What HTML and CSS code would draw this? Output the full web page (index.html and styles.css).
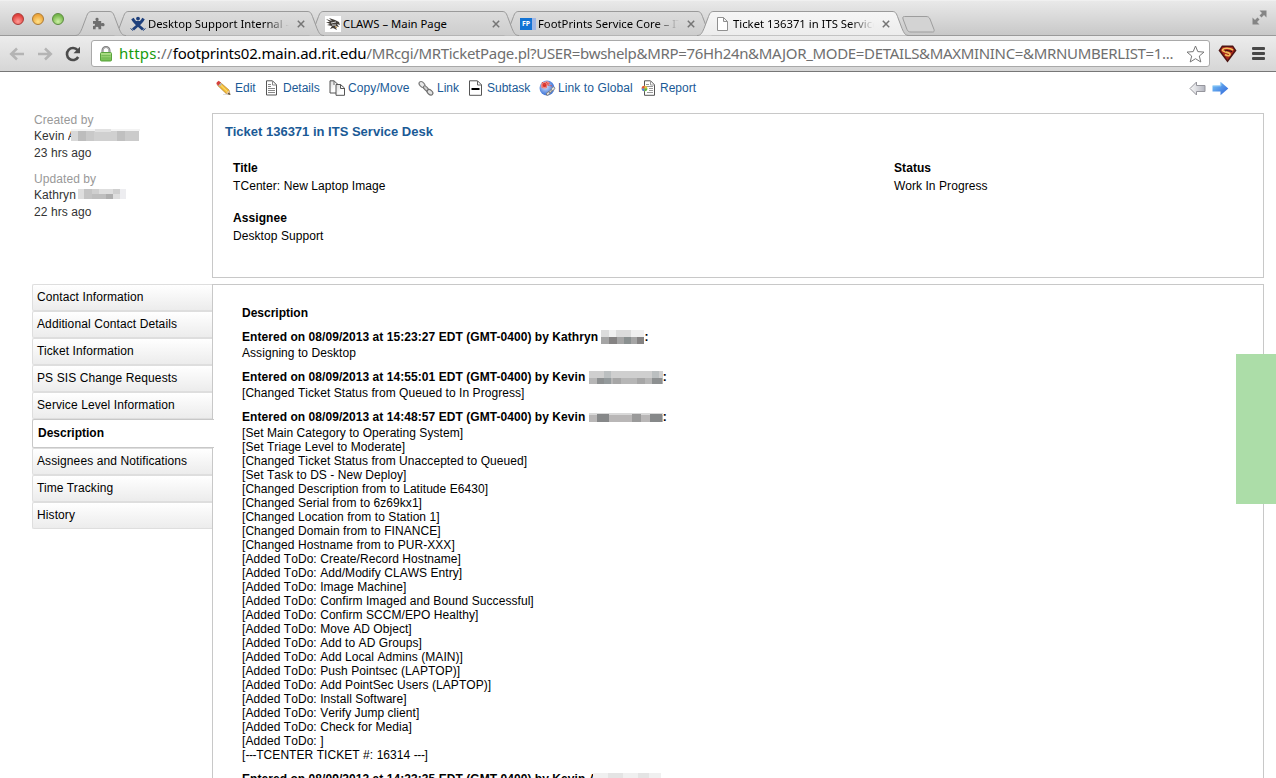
FILE: index.html
```html
<!DOCTYPE html>
<html lang="en">
<head>
<meta charset="utf-8">
<title>Ticket 136371 in ITS Service Desk</title>
<link rel="stylesheet" href="styles.css">
</head>
<body>
<svg width="0" height="0" class="defs">
  <defs>
    <linearGradient id="tabfill" x1="0" y1="0" x2="0" y2="1"><stop offset="0" stop-color="#dcdcdc"/><stop offset="1" stop-color="#cdcdcd"/></linearGradient>
    <linearGradient id="activefill" x1="0" y1="0" x2="0" y2="1"><stop offset="0" stop-color="#f6f6f6"/><stop offset="1" stop-color="#ececec"/></linearGradient>
    <linearGradient id="gl" x1="0" y1="0" x2="0" y2="1"><stop offset="0" stop-color="#b5e08d"/><stop offset="1" stop-color="#6dbb4b"/></linearGradient>
    <linearGradient id="blue" x1="0" y1="0" x2="1" y2="1"><stop offset="0" stop-color="#7cc8f8"/><stop offset="1" stop-color="#2c62d8"/></linearGradient>
    <linearGradient id="grey" x1="0" y1="0" x2="1" y2="0"><stop offset="0" stop-color="#fafafa"/><stop offset="1" stop-color="#b4b6c0"/></linearGradient>
    <radialGradient id="globe" cx=".4" cy=".4"><stop offset="0" stop-color="#dbe9ff"/><stop offset="1" stop-color="#4c7fdc"/></radialGradient>
    <linearGradient id="paper" x1="0" y1="0" x2="1" y2="1"><stop offset="0" stop-color="#d8d8d8"/><stop offset=".6" stop-color="#fff"/></linearGradient>
    <g id="chain" fill="none" stroke-linecap="round">
      <g stroke="#7e7e7e" stroke-width="3.2"><path d="M2.5 3.5 5.5 6.5M6 7l3.5 3.500M9.500 10.500 12.500 13"/></g>
      <ellipse cx="4" cy="4.500" rx="3.400" ry="2.200" transform="rotate(45 4 4.500)" stroke="#808080" stroke-width="1.200" fill="#e8e8e8"/>
      <ellipse cx="8" cy="8.500" rx="3.200" ry="1.600" transform="rotate(45 8 8.500)" stroke="#777" fill="#ccc"/>
      <ellipse cx="12" cy="12.300" rx="3.200" ry="2.200" transform="rotate(40 12 12.300)" stroke="#707070" stroke-width="1.200" fill="#e2e2e2"/>
    </g>
    <path id="tabwide" d="M0 24.500C4 24.500 5 22 7 17.500L11.500 5.500C13 1.500 14 .5 17 .5H195C198 .5 199 1.500 200.500 5.500L205 17.500C207 22 208 24.500 212 24.500" stroke="#9a9a9a"/>
  </defs>
</svg>

<header class="titlebar">
  <div class="lights"><i class="light red"></i><i class="light amber"></i><i class="light green"></i></div>
  <div class="tabs">
    <div class="tab tab-small">
      <svg width="51" height="25"><path d="M0 24.500C4 24.500 5 22 7 17.500L11.500 5.500C13 1.500 14 .5 17 .5H34C37 .5 38 1.500 39.500 5.500L44 17.500C46 22 47 24.500 51 24.500" fill="url(#tabfill)" stroke="#9a9a9a"/></svg>
      <div class="tab-body">
        <svg width="13" height="13" viewBox="0 0 13 13"><path d="M1 4H4C3 2.500 3.300.8 5 .8S7 2.500 6.200 4H9.200V6.500C10.500 5.700 12.600 6 12.600 7.700S10.500 9.600 9.200 8.800V12.300H6.300C7 10.800 6.300 9.800 5 9.800S3.200 10.800 3.800 12.300H1V8.800C2.300 9.300 3 8.800 3 7.800S2.300 6.600 1 7Z" fill="#6e6e6e"/></svg>
      </div>
    </div>
    <div class="tab">
      <svg width="212" height="25"><use href="#tabwide" fill="url(#tabfill)"/></svg>
      <div class="tab-body">
        <svg width="16" height="16" viewBox="0 0 16 16"><g fill="none" stroke="#1d3f7c" stroke-width="2.800"><path d="M2.500 2.500C5 7.500 9.500 10 13 13.500M13.500 2.500C11 7.500 6.500 10 3 13.500"/></g><circle cx="8" cy="2.600" r="1.900" fill="#1d3f7c"/><path d="M.5 12.500 3 14.500M15.500 12.500 13 14.500M5.500 5.500H10.500L9 9H7Z" stroke="#1d3f7c" fill="#1d3f7c"/></svg>
        <span class="label s1">Desktop Support Internal –</span>
        <svg class="x" width="8" height="8"><path d="M.8.8 7.200 7.200M7.200.8.8 7.200"/></svg>
      </div>
    </div>
    <div class="tab">
      <svg width="212" height="25"><use href="#tabwide" fill="url(#tabfill)"/></svg>
      <div class="tab-body">
        <svg width="16" height="16"><rect width="16" height="16" fill="#fff"/><path d="M1 3 7 5 4 2 10 4 14 6 15 9 12 8 14 11 10 10 12 14 8 12 5 13 7 10 2 9 5 8 1 6 5 6Z" fill="#443f3a"/><path d="M6 7 11 6M7 9 11 9" stroke="#ddd"/><path d="M10 10 12 12" stroke="#c89a4c"/></svg>
        <span class="label s2">CLAWS – Main Page</span>
        <svg class="x" width="8" height="8"><path d="M.8.8 7.200 7.200M7.200.8.8 7.200"/></svg>
      </div>
    </div>
    <div class="tab">
      <svg width="212" height="25"><use href="#tabwide" fill="url(#tabfill)"/></svg>
      <div class="tab-body">
        <span class="fp"><b>FP</b></span>
        <span class="label s3">FootPrints Service Core – IT</span>
        <svg class="x" width="8" height="8"><path d="M.8.8 7.200 7.200M7.200.8.8 7.200"/></svg>
      </div>
    </div>
    <div class="tab active">
      <svg width="212" height="25"><use href="#tabwide" fill="url(#activefill)"/></svg>
      <div class="tab-body">
        <svg width="16" height="16"><path d="M2.500 1.500H8.500L12.500 5.500V14.500H2.500ZM8.500 1.500V5.500H12.500" fill="#fff" stroke="#909090"/></svg>
        <span class="label s4">Ticket 136371 in ITS Service</span>
        <svg class="x" width="8" height="8"><path d="M.8.8 7.200 7.200M7.200.8.8 7.200"/></svg>
      </div>
    </div>
    <svg class="newtab" width="33" height="17"><path d="M2.500.5H24C26 .5 27 1 28 3L32 13.500C32.500 15.500 32 16 30.500 16H9C7 16 6 15.500 5 13.500L1 3C.5 1 1 .5 2.500.5Z" fill="#d3d3d3" stroke="#9d9d9d"/></svg>
  </div>
  <svg class="expand" width="15" height="15"><path d="M7.500.5H14.500V7.500L12 5 9.500 7.500 7.500 5.500 10 3ZM7.500 14.500H.5V7.500L3 10 5.500 7.500 7.500 9.500 5 12Z" fill="#858585"/></svg>
</header>

<div class="toolbar">
  <svg class="nav-icon" width="16" height="14"><path d="M8 1.500 2.200 7 8 12.500M2.500 7H15" /></svg>
  <svg class="nav-icon" width="16" height="14"><path d="M8 1.500 13.800 7 8 12.500M13.500 7H1" /></svg>
  <svg class="reload" width="16" height="16"><path d="M12.600 4.200A6 6 0 1 0 13.200 11" fill="none" stroke="#4c4c4c" stroke-width="2.600"/><path d="M15 .8V7.300H8.500Z" fill="#4c4c4c"/></svg>
  <div class="omnibox">
    <svg width="12" height="16"><path d="M2.500 8V4.500A3.500 3.500 0 0 1 9.500 4.500V8" fill="none" stroke="#777" stroke-width="2"/><path d="M2.700 8V4.500A3.300 3.300 0 0 1 9.300 4.500V8" fill="none" stroke="#ccc" stroke-width=".7"/><rect x=".5" y="6.500" width="11" height="8.500" rx="1" fill="url(#gl)" stroke="#58a33c"/><path d="M1.500 9.500H10.500M1.500 12H10.500" stroke="#67b04a" stroke-width=".7"/></svg>
    <span class="url"><span class="scheme">https</span><span class="dim sep">://</span><span class="host">footprints02.main.ad.rit.edu</span><span class="dim path">/MRcgi/MRTicketPage.pl?USER=bwshelp&amp;MRP=76Hh24n&amp;MAJOR_MODE=DETAILS&amp;MAXMININC=&amp;MRNUMBERLIST=1...</span></span>
    <svg class="star" width="19" height="18"><path d="M9.500 1 11.800 6.600 18 7.100 13.300 11 14.800 17 9.500 13.700 4.200 17 5.700 11 1 7.100 7.200 6.600Z" fill="#fff" stroke="#777"/></svg>
  </div>
  <svg class="super" width="19" height="18"><path d="M4 .5H15L18.500 5.500 9.500 17.500.5 5.500Z" fill="#4e1513"/><path d="M4.500 2H14.500L16.500 5.500 9.500 15 2.500 5.500Z" fill="#a8261c"/><path d="M15 5C12 2.500 5 2.800 4.500 5S12 7 12 9.200 9 11 7 9.500" fill="none" stroke="#f3bf5a" stroke-width="1.700"/><path d="M7 6C9 5 12 6 14 6.500" stroke="#2c0d0b" fill="none"/></svg>
  <div class="menu"><i></i><i></i><i></i></div>
</div>

<main class="page">
  <nav class="actions">
    <a class="a1"><svg width="16" height="16"><path d="M7 14.500H15" stroke="#ddd"/><path d="M4.200 2.300 13 10 14 14.500 10 13.400 1.600 5.400Z" fill="#f3bd34" stroke="#a5702c" stroke-width=".6"/><path d="M4.500 5 11.500 11.800" stroke="#fbe58c"/><path d="M2.800.8 5 2.800 2.400 5.800.4 4Q0 2 2.800.8Z" fill="#d5403b"/><path d="M4.800 2.800 6 4 3.800 6.600 2.400 5.600Z" fill="#b5b5b5"/><path d="M12.800 10.500 14 14.500 10 13.200Z" fill="#e9c9a0"/><path d="M13 12.500 14.300 14.800 11.800 14Z" fill="#333"/></svg>Edit</a>
    <a class="a2"><svg width="16" height="16"><path d="M2.500.8H8.500L12.500 4.800V15H2.500Z" fill="#fff" stroke="#555"/><path d="M8.500 1V5H12.500M4 4.500H7M4 6.500H7M4 8.500H11M4 10.500H11M4 12.500H11" fill="none" stroke="#888"/></svg>Details</a>
    <a class="a3"><svg width="17" height="16"><path d="M1 .8H5L9 4.500V13H1Z" fill="url(#paper)" stroke="#555"/><path d="M5 1V5" stroke="#666"/><path d="M7 4.500H11.500L15.500 8V15.300H7Z" fill="url(#paper)" stroke="#555"/><path d="M11.500 4.500V8.500H15.500" fill="none" stroke="#555"/></svg>Copy/Move</a>
    <a class="a4"><svg width="16" height="16"><use href="#chain"/></svg>Link</a>
    <a class="a5"><svg width="16" height="16"><path d="M1.500.8H9.500L13.500 4.800V15.300H1.500Z" fill="#fff" stroke="#555"/><path d="M9.500 1V5H13.500" fill="none" stroke="#666"/><path d="M3.500 9H11.500" stroke="#000" stroke-width="2"/></svg>Subtask</a>
    <a class="a6"><svg width="17" height="16"><circle cx="8" cy="8" r="7.500" fill="url(#globe)"/><path d="M2 4C4 2 8 0 10 2S8 5 8 7 4 9 2 7Z" fill="#ef8a86"/><circle cx="5.500" cy="5" r="2" fill="#d6302a"/><path d="M3 2 8 8M8 2 3 8M8 4 11 3M9 5 13 6" stroke="#e0463e" stroke-dasharray="1.500 1"/><g transform="translate(16.500 6) scale(-.62 .62)"><use href="#chain"/></g></svg>Link to Global</a>
    <a class="a7"><svg width="16" height="16"><path d="M3.500.8H9.500L13.500 4.800V15.300H3.500Z" fill="#fff" stroke="#555"/><path d="M9.500 1V5H13.500M5 4.500H8M5 6.500H12M8 8.500H12M8 10.500H12M6 12.500H12" fill="none" stroke="#999"/><circle cx="3.500" cy="8.500" r="2.800" fill="#e9c53c"/><path d="M3.500 8.500V5.700A2.800 2.800 0 0 0 .7 8.500Z" fill="#e0503f"/><path d="M3.500 8.500H.7A2.800 2.800 0 0 0 3.500 11.300Z" fill="#4f7fe6"/><path d="M3.500 8.500H6.300A2.800 2.800 0 0 1 3.500 11.300Z" fill="#58b948"/></svg>Report</a>
    <span class="pager">
      <svg width="17" height="15"><path d="M1 7.500 7.500 1V4.500H16V10.500H7.500V14Z" fill="url(#grey)" stroke="#95959c"/></svg>
      <svg width="17" height="15"><path d="M.5 4.500H8.500V.8L16.300 7.500 8.500 14.200V10.500H.5Z" fill="url(#blue)"/><path d="M1 5H9V2" stroke="#a6ddfb" fill="none" stroke-width=".6"/></svg>
    </span>
  </nav>

  <section class="summary">
    <aside class="people">
      <div class="lbl">Created by</div>
      <div class="who">Kevin <span class="cut">A</span><svg width="69" height="12"><path d="M0 0H69V2H0Z" fill="#f3f3f3"/><path d="M0 2H7V12H0Z" fill="#d8d8d8"/><path d="M7 2H15V12H7Z" fill="#bdbdbd"/><path d="M15 2H23V12H15Z" fill="#c9c9c9"/><path d="M23 2H46V12H23Z" fill="#d0d0d0"/><path d="M46 2H54V12H46Z" fill="#c0c0c0"/><path d="M54 2H68V12H54Z" fill="#cbcbcb"/><path d="M24 0H40V3H24Z" fill="#e1e1e1"/></svg></div>
      <div class="when">23 hrs ago</div>
      <div class="lbl second">Updated by</div>
      <div class="who">Kathryn <svg width="48" height="10"><path d="M0 0H48V10H0Z" fill="#dedede"/><path d="M6 0H14V10H6Z" fill="#c4c4c4"/><path d="M14 0H21V5H14ZM35 0H42V5H35Z" fill="#cfcfcf"/><path d="M14 5H35V10H14Z" fill="#bebebe"/><path d="M28 5H35V10H28Z" fill="#aeaeae"/><path d="M42 0H48V10H42Z" fill="#ededf0"/></svg></div>
      <div class="when">22 hrs ago</div>
    </aside>
    <div class="card">
      <h1>Ticket 136371 in ITS Service Desk</h1>
      <div class="fields">
        <dl><dt>Title</dt><dd>TCenter: New Laptop Image</dd></dl>
        <dl><dt>Status</dt><dd>Work In Progress</dd></dl>
        <dl><dt>Assignee</dt><dd>Desktop Support</dd></dl>
      </div>
    </div>
  </section>

  <section class="detail">
    <ul class="sections">
      <li>Contact Information</li>
      <li>Additional Contact Details</li>
      <li>Ticket Information</li>
      <li>PS SIS Change Requests</li>
      <li>Service Level Information</li>
      <li class="current">Description</li>
      <li>Assignees and Notifications</li>
      <li>Time Tracking</li>
      <li>History</li>
    </ul>
    <div class="log">
      <h2>Description</h2>
      <h3>Entered on 08/09/2013 at 15:23:27 EDT (GMT-0400) by Kathryn <svg width="43" height="14"><path d="M0 0H43V7H0Z" fill="#dcdcdc"/><path d="M8 0H15V7H8ZM30 0H43V7H30Z" fill="#f0f0f0"/><path d="M0 7H43V14H0Z" fill="#a5a5a5"/><path d="M8 7H16V14H8ZM36 7H43V14H36Z" fill="#858383"/><path d="M23 7H30V14H23Z" fill="#8a9090"/></svg>:</h3>
      <p>Assigning to Desktop</p>
      <h3>Entered on 08/09/2013 at 14:55:01 EDT (GMT-0400) by Kevin <svg width="74" height="13"><path d="M0 0H74V7H0Z" fill="#cfcfcf"/><path d="M15 0H22V7H15ZM63 0H70V7H63Z" fill="#bbbfc0"/><path d="M0 7H74V13H0Z" fill="#b6b6b6"/><path d="M8 7H15V13H8ZM63 7H73V13H63Z" fill="#8d9091"/><path d="M15 7H22V13H15Z" fill="#949a9c"/><path d="M24 7H32V13H24ZM48 7H56V13H48Z" fill="#a6a6a6"/></svg>:</h3>
      <p>[Changed Ticket Status from Queued to In Progress]</p>
      <h3>Entered on 08/09/2013 at 14:48:57 EDT (GMT-0400) by Kevin <svg width="74" height="9"><path d="M0 0H74V9H0Z" fill="#b9b7b7"/><path d="M0 0H74V2H0Z" fill="#d9d9d9"/><path d="M8 1H20V9H8ZM61 1H73V9H61Z" fill="#868889"/><path d="M43 1H52V9H43Z" fill="#9a9a9a"/></svg>:</h3>
      <p>[Set Main Category to Operating System]<br>
      [Set Triage Level to Moderate]<br>
      [Changed Ticket Status from Unaccepted to Queued]<br>
      [Set Task to DS - New Deploy]<br>
      [Changed Description from to Latitude E6430]<br>
      [Changed Serial from to 6z69kx1]<br>
      [Changed Location from to Station 1]<br>
      [Changed Domain from to FINANCE]<br>
      [Changed Hostname from to PUR-XXX]<br>
      [Added ToDo: Create/Record Hostname]<br>
      [Added ToDo: Add/Modify CLAWS Entry]<br>
      [Added ToDo: Image Machine]<br>
      [Added ToDo: Confirm Imaged and Bound Successful]<br>
      [Added ToDo: Confirm SCCM/EPO Healthy]<br>
      [Added ToDo: Move AD Object]<br>
      [Added ToDo: Add to AD Groups]<br>
      [Added ToDo: Add Local Admins (MAIN)]<br>
      [Added ToDo: Push Pointsec (LAPTOP)]<br>
      [Added ToDo: Add PointSec Users (LAPTOP)]<br>
      [Added ToDo: Install Software]<br>
      [Added ToDo: Verify Jump client]<br>
      [Added ToDo: Check for Media]<br>
      [Added ToDo: ]<br>
      [<span class="dashes">---</span>TCENTER TICKET #: 16314 <span class="dashes">---</span>]</p>
      <h3>Entered on 08/09/2013 at 14:23:35 EDT (GMT-0400) by Kevin <span class="cut">A</span><svg width="68" height="12"><path d="M0 0H68V12H0Z" fill="#f0f0f0"/><path d="M15 0H30V12H15ZM45 0H56V12H45Z" fill="#e4e4e4"/></svg></h3>
    </div>
  </section>
  <div class="side-flap"></div>
</main>
</body>
</html>
```

FILE: styles.css
```css
* { box-sizing: border-box; }
body { margin: 0; height: 778px; overflow: hidden; background: #fff; font: 12px/14px Arial, "Liberation Sans", sans-serif; color: #000; display: flex; flex-direction: column; }
.defs { height: 0; position: absolute; }
svg { display: block; flex: none; }

/* window title bar and tabs */
.titlebar { height: 36px; flex: none; display: flex; align-items: flex-end; background: linear-gradient(#e9e9e9, #c8c8c8); border-bottom: 1px solid #9a9a9a; border-top: 1px solid #f0f0f0; font-family: "Noto Sans", sans-serif; }
.lights { display: flex; gap: 8px; padding: 0 0 10px 12px; width: 75px; }
.light { width: 12px; height: 12px; border-radius: 50%; border: 1px solid; }
.red { background: radial-gradient(circle at 50% 75%, #ff9d97, #e1413d 70%); border-color: #a93a37; }
.amber { background: radial-gradient(circle at 50% 75%, #ffe28a, #eda53a 70%); border-color: #ab7a34; }
.green { background: radial-gradient(circle at 50% 75%, #cdf0a5, #76b74c 70%); border-color: #5b8a40; }
.tabs { display: flex; align-items: flex-end; flex: 1; margin-bottom: -1px; }
.tab { display: grid; flex: none; width: 212px; height: 25px; margin-right: -17px; z-index: 1; }
.tab:nth-child(1) { z-index: 5; width: 51px; margin-right: -14px; }
.tab:nth-child(2) { z-index: 4; }
.tab:nth-child(3) { z-index: 3; }
.tab:nth-child(4) { z-index: 2; }
.tab.active { z-index: 6; margin-right: -7px; }
.tab > * { grid-area: 1 / 1; }
.tab-body { display: flex; align-items: center; padding: 0 19px 0 18px; gap: 2px; min-width: 0; }
.tab-small .tab-body { padding-left: 17px; }
.label { flex: 1; min-width: 0; font-size: 11.300px; line-height: 16px; white-space: nowrap; overflow: hidden; margin-right: 6px; padding-top: 1px; }
.s1, .s3, .s4 { -webkit-mask-image: linear-gradient(90deg, #000 83%, transparent); mask-image: linear-gradient(90deg, #000 83%, transparent); }
.x path { stroke: #757575; stroke-width: 1.500; fill: none; }
.fp { width: 16px; height: 12px; background: #9fb6e4; display: flex; }
.fp b { width: 12px; background: #1273d4; color: #fff; font-size: 7px; line-height: 12px; text-align: center; }
.newtab { margin-bottom: 3px; }
.expand { margin: 0 9px 10px 0; }

/* navigation toolbar */
.toolbar { height: 36px; flex: none; display: flex; align-items: center; padding: 0 11px 0 9px; background: linear-gradient(#ececec, #d6d6d6); border-bottom: 1px solid #777; }
.nav-icon { margin-right: 12px; }
.nav-icon path { fill: none; stroke: #b4b4b4; stroke-width: 2.500; }
.reload { margin-right: 10px; }
.omnibox { width: 1119px; height: 27px; flex: none; display: flex; align-items: center; background: #fff; border: 1px solid #a9a9a9; border-radius: 3px; padding: 0 4px 0 8px; }
.url { flex: 1; margin-left: 7px; padding-bottom: 2px; font: 15px/24px "Noto Sans", sans-serif; white-space: nowrap; }
.scheme { color: #179b0c; letter-spacing: .25px; }
.dim { color: #6f6f6f; }
.sep { letter-spacing: .25px; }
.host { letter-spacing: -.18px; }
.path { letter-spacing: -.33px; }
.super { margin: 0 15px 0 8px; }
.menu { display: flex; flex-direction: column; gap: 2px; }
.menu i { width: 13px; height: 3px; border-radius: 1px; background: #484848; }

/* ticket page */
.page { flex: 1; min-height: 0; position: relative; display: flex; flex-direction: column; }
.actions { height: 41px; flex: none; padding: 0 47px 9px 216px; display: flex; align-items: center; }
.actions a { display: flex; align-items: center; gap: 3px; color: #1a5a96; flex: none; white-space: nowrap; }
.a1 { width: 48px; } .a2 { width: 65px; } .a3 { width: 89px; } .a4 { width: 50px; } .a5 { width: 71px; } .a6 { width: 102px; }
.actions .a3, .actions .a6 { gap: 2px; }
.actions .a3, .actions .a6 { letter-spacing: .1px; }
.pager { display: flex; gap: 6px; margin-left: auto; }
.summary { display: flex; height: 165px; flex: none; margin-bottom: 6px; }
.people { width: 212px; padding-left: 34px; color: #333; letter-spacing: .08px; }
.people div { height: 17px; line-height: 15px; display: flex; align-items: center; white-space: pre; }
.people svg { margin: 0 0 3px -1px; }
.people .lbl { color: #999; height: 15px; }
.people .second { margin-top: 10px; }
.cut { width: 4px; overflow: hidden; }
.card { width: 1052px; border: 1px solid #c8c8c8; padding: 10px 12px; }
h1, h2, h3, dl, dd, p, ul { margin: 0; padding: 0; }
h1 { font-size: 13px; line-height: 16px; color: #1a5a96; }
.fields { display: grid; grid-template-columns: 661px 1fr; row-gap: 14px; padding: 19px 8px 0; letter-spacing: .07px; }
dt { font-weight: bold; line-height: 18px; }
dd { line-height: 18px; }
.detail { display: flex; flex: 1; min-height: 0; padding-left: 32px; }
.sections { width: 181px; list-style: none; margin-right: -1px; z-index: 1; letter-spacing: .1px; }
.sections li { height: 27px; width: 180px; line-height: 25px; padding-left: 4px; border: 1px solid #dedede; border-right: 0; background: linear-gradient(#fff, #ececec); border-radius: 2px 0 0 2px; }
.sections .current { height: 29px; width: 182px; line-height: 27px; padding-left: 5px; border: 1px solid #c8c8c8; border-right: 0; background: #fff; font-weight: bold; letter-spacing: 0; }
.log { width: 1052px; border: 1px solid #c8c8c8; border-bottom: 0; padding: 20px 29px; }
h2 { font-size: 12px; line-height: 16px; }
h3 { font-size: 12px; line-height: 16px; height: 17px; margin-top: 9px; padding-bottom: 1px; display: flex; align-items: center; white-space: pre; letter-spacing: .055px; }
h2 + h3 { margin-top: 8px; }
.log p { white-space: nowrap; font-kerning: none; letter-spacing: .06px; }
.log .dashes { letter-spacing: -.4px; }
.side-flap { position: absolute; right: 0; top: 282px; width: 40px; height: 150px; background: #acdda8; }
```
